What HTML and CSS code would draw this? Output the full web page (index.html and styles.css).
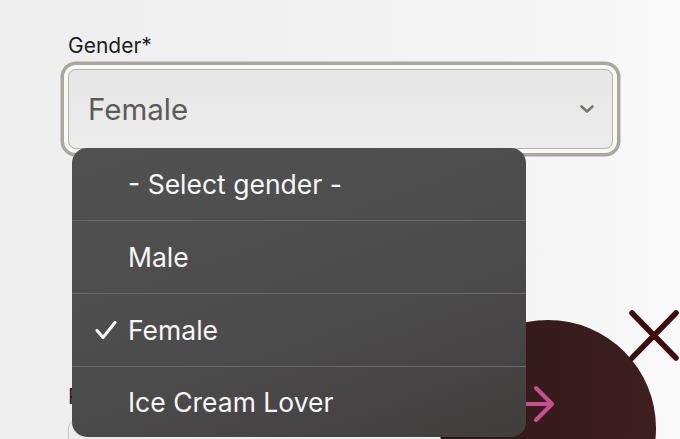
FILE: index.html
```html
<!DOCTYPE html>
<html lang="en">
<head>
<meta charset="utf-8">
<title>Gender select</title>
<link rel="stylesheet" href="styles.css">
</head>
<body>
<main class="page">
  <form class="form">
    <div class="field">
      <label class="label">Gender*</label>
      <div class="select is-focused">
        <span class="select-value">Female</span>
        <svg class="chevron" viewBox="0 0 14 8" width="14" height="8" aria-hidden="true">
          <path d="M1.5 1.5 L7 6.5 L12.5 1.5" fill="none" stroke="#77766f" stroke-width="2.6" stroke-linecap="round" stroke-linejoin="round"/>
        </svg>
      </div>
    </div>
    <div class="field field-next">
      <label class="label">P</label>
      <div class="input"></div>
    </div>
  </form>

  <div class="fab">
    <svg class="fab-arrow" viewBox="0 0 40 40" width="40" height="40" aria-hidden="true">
      <path d="M2 19 H34 M18 3 L34 19 L18 35" fill="none" stroke="#c94f93" stroke-width="4" stroke-linecap="round" stroke-linejoin="round"/>
    </svg>
  </div>

  <svg class="close" viewBox="0 0 54 54" width="54" height="54" aria-hidden="true">
    <path d="M4 4 L48 49 M4 49 L48 4" fill="none" stroke="#3d0c0c" stroke-width="5.5" stroke-linecap="round"/>
  </svg>

  <ul class="menu">
    <li class="menu-item"><span class="check"></span><span class="menu-text">- Select gender -</span></li>
    <li class="menu-item"><span class="check"></span><span class="menu-text">Male</span></li>
    <li class="menu-item is-selected">
      <span class="check">
        <svg viewBox="0 0 22 20" width="22" height="20" aria-hidden="true">
          <path d="M2 10.5 L8 17.5 L20 2.5" fill="none" stroke="#ffffff" stroke-width="3" stroke-linecap="round" stroke-linejoin="round"/>
        </svg>
      </span>
      <span class="menu-text">Female</span>
    </li>
    <li class="menu-item"><span class="check"></span><span class="menu-text">Ice Cream Lover</span></li>
  </ul>
</main>
</body>
</html>
```

FILE: styles.css
```css
* { box-sizing: border-box; }

html, body {
  margin: 0;
  padding: 0;
  height: 439px;
  overflow: hidden;
}

body {
  font-family: Inter, "Noto Sans", sans-serif;
  background: linear-gradient(90deg, #eeeeee 0%, #f1f1f1 40%, #f5f5f5 75%, #f9f9f9 100%);
}

.page {
  position: relative;
  width: 680px;
  height: 439px;
  overflow: hidden;
}

.form {
  padding: 33px 0 0 68px;
  width: 613px;
}

.field {
  display: flex;
  flex-direction: column;
}

.field-next {
  margin-top: 235px;
}

.label {
  font-size: 21px;
  line-height: 25px;
  color: #1e1e1e;
  margin-bottom: 11px;
}

.select {
  height: 80px;
  border: 1.5px solid #b6b3ac;
  border-radius: 8px;
  background: linear-gradient(180deg, #e7e7e7, #ececec);
  display: flex;
  align-items: center;
  justify-content: space-between;
  padding: 0 18px 0 19px;
}

.is-focused {
  box-shadow: 0 0 0 4px #f8f8f6, 0 0 0 7.5px #aaa7a1;
}

.select-value {
  font-size: 29.5px;
  line-height: 36px;
  color: #5b5a56;
}

.input {
  height: 80px;
  border: 1.5px solid #c6c4be;
  border-radius: 8px;
  background: #ececec;
}

.menu {
  position: absolute;
  left: 72px;
  top: 148px;
  width: 454px;
  margin: 0;
  padding: 0;
  list-style: none;
  border-radius: 15px;
  overflow: hidden;
  background: linear-gradient(160deg, #525151 0%, #4d4c4c 55%, #403d3d 100%);
}

.menu-item {
  height: 73px;
  display: flex;
  align-items: center;
  padding-left: 23px;
  border-top: 1px solid #6b6a6a;
}

.menu-item:first-child {
  height: 72px;
  border-top: 0;
}

.menu-item:last-child {
  height: 71px;
}

.check {
  width: 33px;
  height: 20px;
  display: flex;
  align-items: center;
}

.menu-text {
  font-size: 26.5px;
  line-height: 32px;
  color: #f7f7f7;
}

.fab {
  position: absolute;
  left: 440px;
  top: 320px;
  width: 216px;
  height: 216px;
  border-radius: 50%;
  background: linear-gradient(90deg, #2b1717 0%, #361b1b 45%, #3e1e1e 100%);
  padding: 65px 0 0 78px;
}

.fab-arrow {
  display: block;
}

.close {
  position: absolute;
  left: 628px;
  top: 309px;
}
```
